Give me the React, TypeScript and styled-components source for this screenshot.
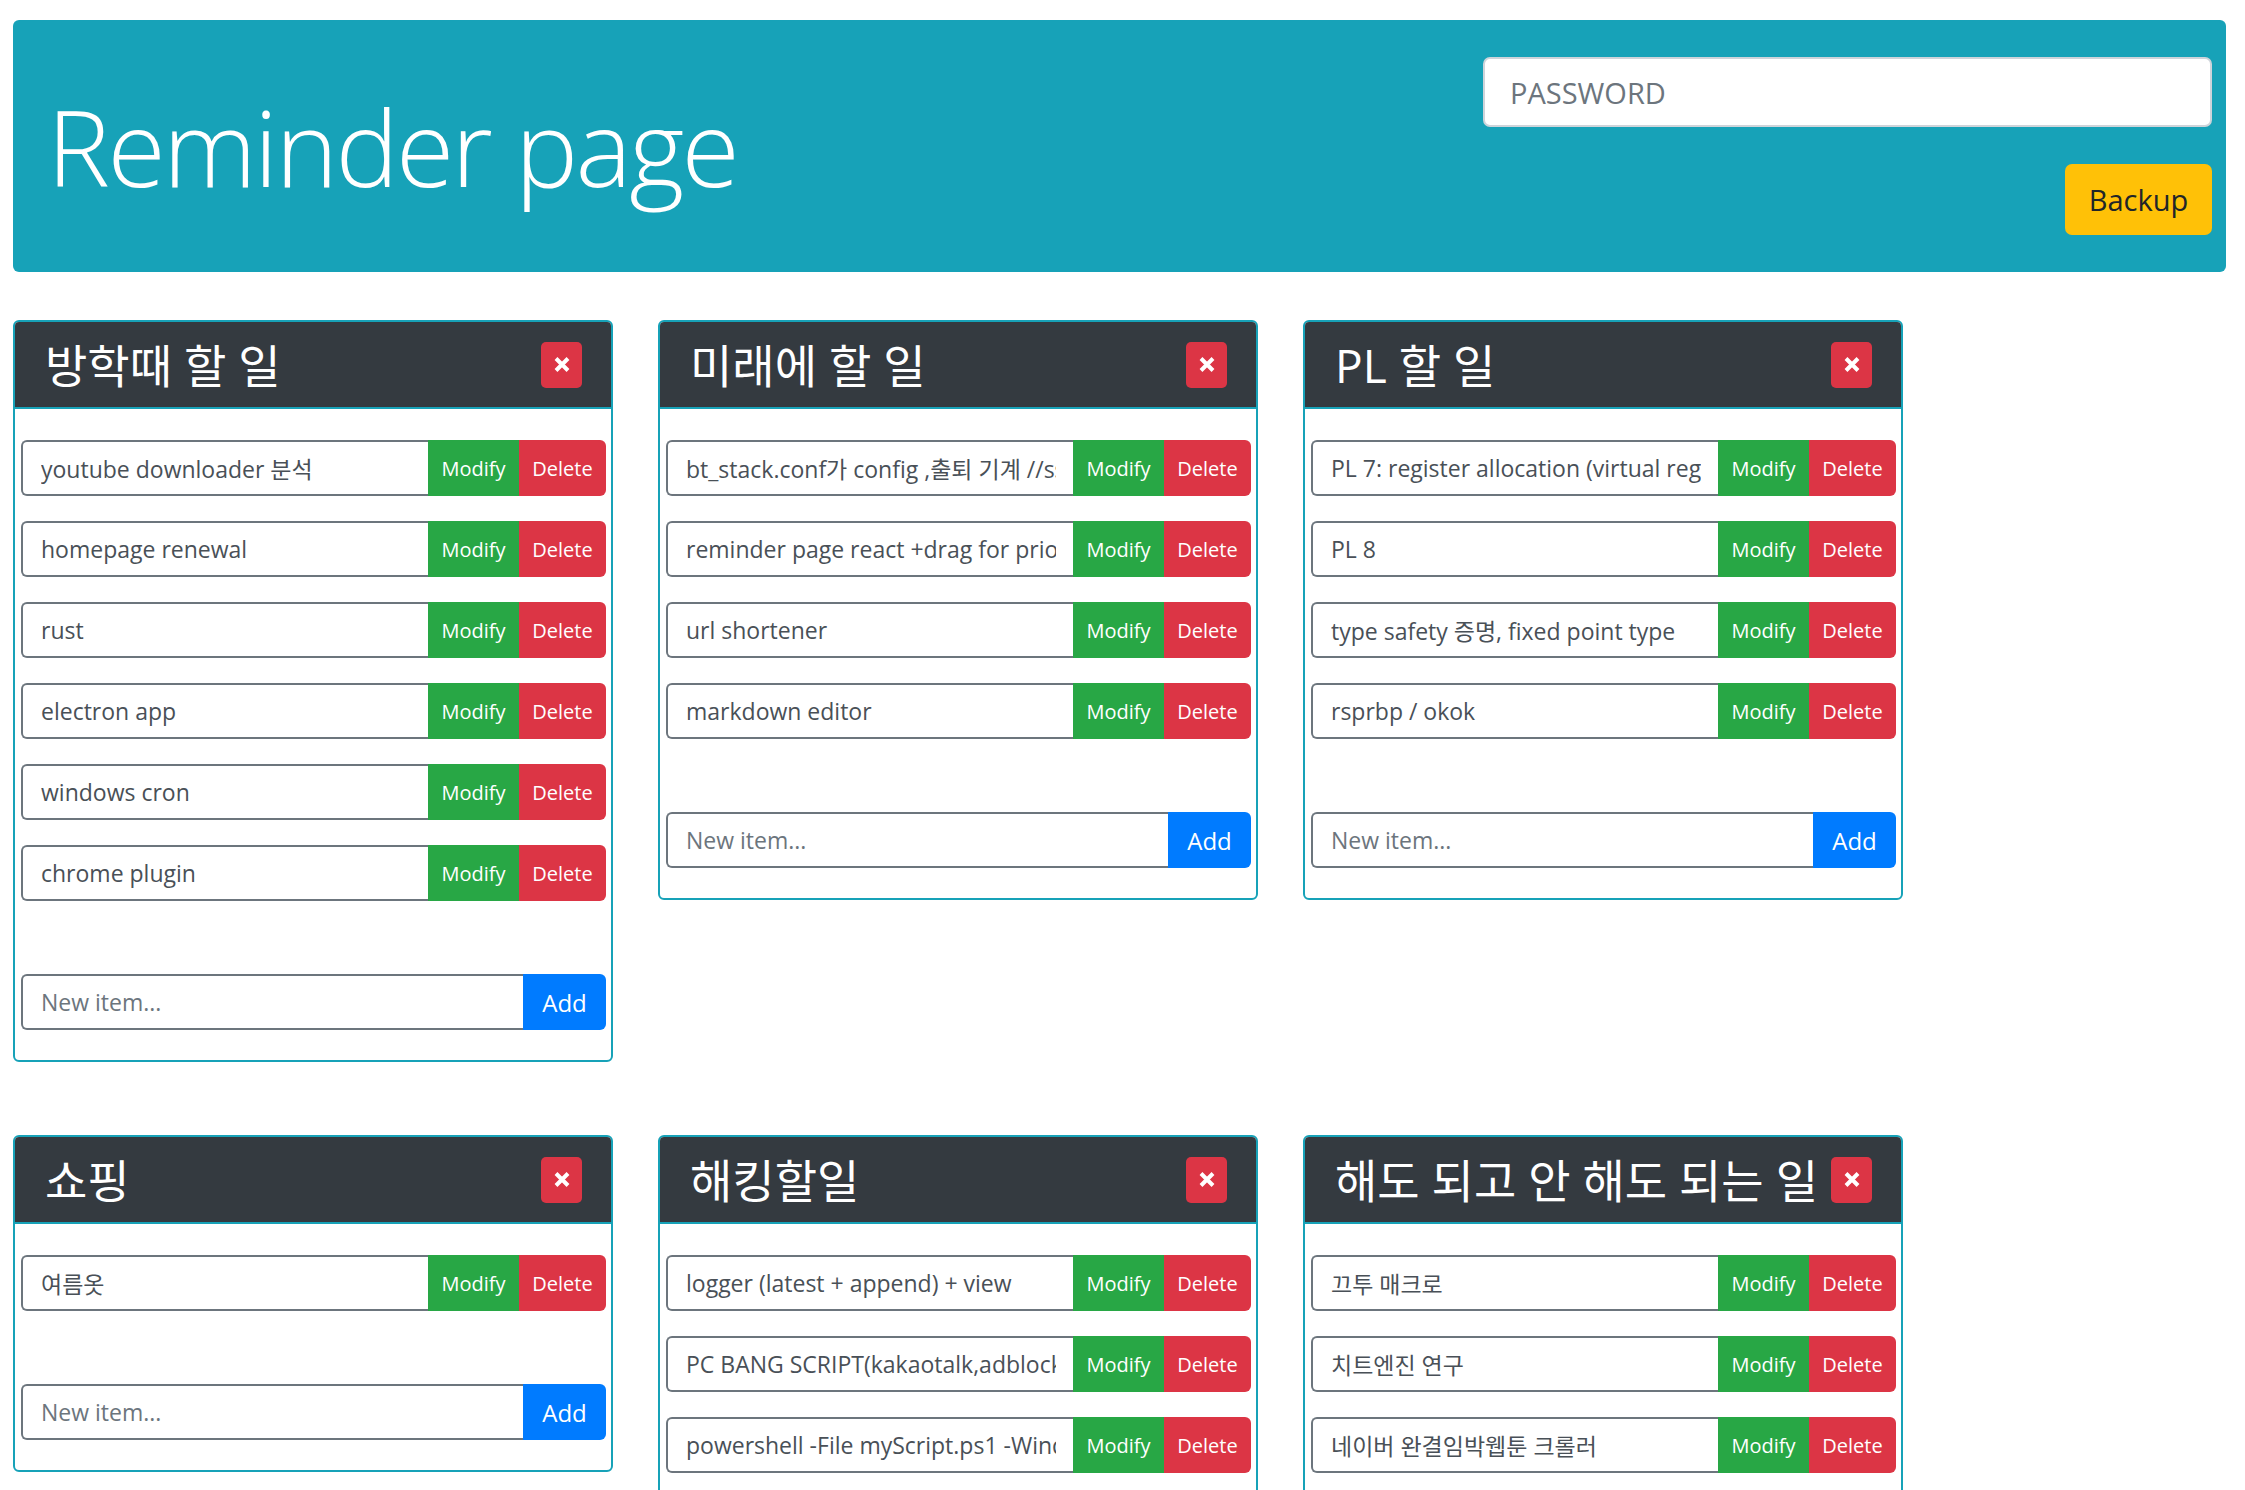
import React from "react";
import styled, { createGlobalStyle } from "styled-components";

const FONT = `"Open Sans", "Noto Sans CJK KR", "Noto Sans", sans-serif`;

const GlobalStyle = createGlobalStyle`
  html, body {
    margin: 0;
    padding: 0;
    background: #ffffff;
  }
  body {
    font-family: ${FONT};
    color: #212529;
  }
  * { box-sizing: border-box; }
`;

const Page = styled.div`
  padding: 20px 19px 40px 13px;
`;

const Jumbotron = styled.header`
  display: flex;
  align-items: center;
  justify-content: space-between;
  height: 252px;
  padding: 0 14px 0 34px;
  background: #17a2b8;
  border-radius: 6px;
`;

const PageTitle = styled.h1`
  margin: 0;
  font-family: ${FONT};
  font-size: 106px;
  font-weight: 300;
  line-height: 1;
  color: #ffffff;
  letter-spacing: -2.6px;
`;

const BackupPanel = styled.div`
  display: flex;
  flex-direction: column;
  align-items: flex-end;
  gap: 37px;
  width: 729px;
`;

const PasswordInput = styled.input`
  width: 100%;
  height: 70px;
  padding: 0 25px;
  border: 2px solid #ced4da;
  border-radius: 7px;
  background: #ffffff;
  font-family: ${FONT};
  font-size: 29px;
  color: #495057;
  outline: none;
  &::placeholder {
    color: #6c757d;
  }
`;

const BackupButton = styled.button`
  width: 147px;
  height: 71px;
  border: none;
  border-radius: 7px;
  background: #ffc107;
  color: #212529;
  font-family: ${FONT};
  font-size: 29px;
  cursor: pointer;
`;

const Board = styled.main`
  display: flex;
  flex-wrap: wrap;
  align-items: flex-start;
  column-gap: 45px;
  row-gap: 73px;
  margin-top: 48px;
`;

const Card = styled.section`
  width: 600px;
  border: 2px solid #17a2b8;
  border-radius: 6px;
  overflow: hidden;
  background: #ffffff;
`;

const CardHeader = styled.div`
  display: flex;
  align-items: center;
  justify-content: space-between;
  height: 87px;
  padding: 0 29px 0 30px;
  background: #343a40;
  border-bottom: 2px solid #17a2b8;
`;

const CardTitle = styled.h2`
  margin: 0;
  font-family: ${FONT};
  font-size: 46px;
  font-weight: 400;
  line-height: 1;
  color: #ffffff;
  white-space: nowrap;
`;

const CloseButton = styled.button`
  display: flex;
  align-items: center;
  justify-content: center;
  flex-shrink: 0;
  width: 41px;
  height: 46px;
  padding: 0;
  border: none;
  border-radius: 5px;
  background: #dc3545;
  cursor: pointer;
`;

const CardBody = styled.div`
  padding: 31px 5px 30px 6px;
`;

const ItemList = styled.div`
  display: flex;
  flex-direction: column;
  gap: 25px;
`;

const InputGroup = styled.div`
  display: flex;
  height: 56px;
`;

const ItemInput = styled.input`
  flex: 1;
  min-width: 0;
  height: 100%;
  padding: 0 17px 0 18px;
  border: 2px solid #6c757d;
  border-right: none;
  border-radius: 6px 0 0 6px;
  background: #ffffff;
  font-family: ${FONT};
  font-size: 23px;
  color: #495057;
  outline: none;
  &::placeholder {
    color: #6c757d;
  }
`;

const ActionButton = styled.button<{ $bg: string; $w: number; $last?: boolean; $big?: boolean }>`
  flex-shrink: 0;
  width: ${(p) => p.$w}px;
  height: 100%;
  padding: 0;
  border: none;
  border-radius: ${(p) => (p.$last ? "0 6px 6px 0" : "0")};
  background: ${(p) => p.$bg};
  color: #ffffff;
  font-family: ${FONT};
  font-size: ${(p) => (p.$big ? "24px" : "20px")};
  cursor: pointer;
`;

const AddRow = styled.div`
  margin-top: 73px;
`;

const CloseIcon = () => (
  <svg width="16" height="15" viewBox="0 0 16 15" aria-hidden="true">
    <path d="M2 1.5 L14 13.5 M14 1.5 L2 13.5" stroke="#ffffff" strokeWidth="4" fill="none" />
  </svg>
);

type List = { title: string; items: string[] };

const lists: List[] = [
  {
    title: "방학때 할 일",
    items: [
      "youtube downloader 분석",
      "homepage renewal",
      "rust",
      "electron app",
      "windows cron",
      "chrome plugin",
    ],
  },
  {
    title: "미래에 할 일",
    items: [
      "bt_stack.conf가 config ,출퇴 기계 //ssh",
      "reminder page react +drag for priority",
      "url shortener",
      "markdown editor",
    ],
  },
  {
    title: "PL 할 일",
    items: [
      "PL 7: register allocation (virtual register)",
      "PL 8",
      "type safety 증명, fixed point type",
      "rsprbp / okok",
    ],
  },
  {
    title: "쇼핑",
    items: ["여름옷"],
  },
  {
    title: "해킹할일",
    items: [
      "logger (latest + append) + view",
      "PC BANG SCRIPT(kakaotalk,adblock)",
      "powershell -File myScript.ps1 -WindowStyle Hidden",
    ],
  },
  {
    title: "해도 되고 안 해도 되는 일",
    items: ["끄투 매크로", "치트엔진 연구", "네이버 완결임박웹툰 크롤러"],
  },
];

const ReminderCard = ({ list }: { list: List }) => (
  <Card>
    <CardHeader>
      <CardTitle>{list.title}</CardTitle>
      <CloseButton aria-label="remove list">
        <CloseIcon />
      </CloseButton>
    </CardHeader>
    <CardBody>
      <ItemList>
        {list.items.map((item) => (
          <InputGroup key={item}>
            <ItemInput defaultValue={item} />
            <ActionButton $bg="#28a745" $w={91}>
              Modify
            </ActionButton>
            <ActionButton $bg="#dc3545" $w={87} $last>
              Delete
            </ActionButton>
          </InputGroup>
        ))}
      </ItemList>
      <AddRow>
        <InputGroup>
          <ItemInput placeholder="New item..." />
          <ActionButton $bg="#007bff" $w={83} $last $big>
            Add
          </ActionButton>
        </InputGroup>
      </AddRow>
    </CardBody>
  </Card>
);

export default function App() {
  return (
    <>
      <GlobalStyle />
      <Page>
        <Jumbotron>
          <PageTitle>Reminder page</PageTitle>
          <BackupPanel>
            <PasswordInput placeholder="PASSWORD" type="password" />
            <BackupButton>Backup</BackupButton>
          </BackupPanel>
        </Jumbotron>
        <Board>
          {lists.map((l) => (
            <ReminderCard key={l.title} list={l} />
          ))}
        </Board>
      </Page>
    </>
  );
}
